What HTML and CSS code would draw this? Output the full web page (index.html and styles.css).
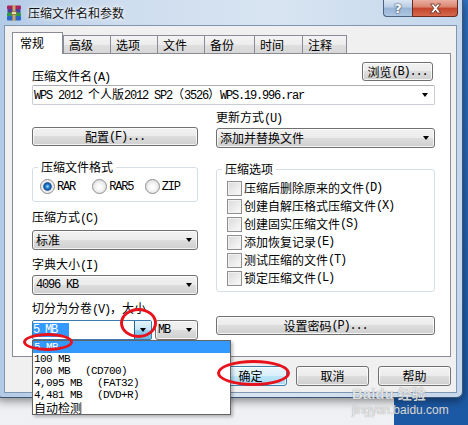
FILE: index.html
```html
<!DOCTYPE html>
<html lang="zh-CN">
<head>
  <meta charset="UTF-8">
  <meta name="viewport" content="width=device-width, initial-scale=1.0">
  <title>压缩文件名和参数</title>
  <link rel="stylesheet" href="styles.css">
</head>
<body>
  <div class="window">
    <div class="titlebar">
      <svg class="app-icon" width="16" height="16" viewBox="0 0 16 16">
        <rect x="1" y="0.5" width="14" height="4" rx="1" fill="#a8245c"/>
        <rect x="1.5" y="4" width="13" height="4" rx="1" fill="#4a3fa0"/>
        <rect x="1" y="7.5" width="14" height="4" rx="1" fill="#2e9a44"/>
        <rect x="1" y="11" width="14" height="4.5" rx="1" fill="#2a66c2"/>
        <rect x="6.5" y="0" width="3" height="16" fill="#c9a66a"/>
        <rect x="5.5" y="6.5" width="5" height="3" fill="#ecdcae" stroke="#6e5630" stroke-width="0.6"/>
      </svg>
      <span class="title">压缩文件名和参数</span>
      <div class="caption-buttons">
        <div class="cap-btn help">?</div>
        <div class="cap-btn close">
          <svg width="13" height="11" viewBox="0 0 13 11">
            <path d="M1.5 1h3.2l1.8 2.4L8.3 1h3.2L8.2 5.3l3.5 4.7H8.5L6.5 7.3 4.5 10H1.3l3.5-4.7z" fill="#fff" stroke="#5a2418" stroke-width="0.8"/>
          </svg>
        </div>
      </div>
    </div>

    <div class="client">
      <div class="tabs">
        <div class="tab active">常规</div>
        <div class="tab">高级</div>
        <div class="tab">选项</div>
        <div class="tab">文件</div>
        <div class="tab tab-backup">备份</div>
        <div class="tab tab-time">时间</div>
        <div class="tab tab-note">注释</div>
      </div>

      <div class="panel">
        <div class="name-row">
          <span class="label">压缩文件名<span class="m">(A)</span></span>
          <div class="btn browse">浏览<span class="m">(B)...</span></div>
        </div>
        <div class="combo edit">
          <span><span class="m">WPS 2012 </span>个人版<span class="m">2012 SP2</span>（<span class="m">3526</span>）<span class="m">WPS.19.996.rar</span></span>
        </div>

        <div class="columns">
          <div class="col">
            <div class="btn config">配置<span class="m">(F)...</span></div>

            <fieldset class="group">
              <legend>压缩文件格式</legend>
              <div class="radios">
                <span class="radio on m">RAR</span>
                <span class="radio m">RAR5</span>
                <span class="radio m">ZIP</span>
              </div>
            </fieldset>

            <span class="label gap-8">压缩方式<span class="m">(C)</span></span>
            <div class="combo gap-4">标准</div>

            <span class="label gap-7">字典大小<span class="m">(I)</span></span>
            <div class="combo gap-2"><span class="m">4096 KB</span></div>

            <span class="label gap-6">切分为分卷<span class="m">(V)</span>，大小</span>
            <div class="volume-row">
              <div class="volume-field">
                <div class="combo edit open">
                  <span class="sel m">5 MB</span>
                  <span class="drop-btn"></span>
                </div>
                <ul class="droplist">
                  <li class="hot">5 MB</li>
                  <li>100 MB</li>
                  <li>700 MB<span class="note">(CD700)</span></li>
                  <li>4,095 MB<span class="note">(FAT32)</span></li>
                  <li>4,481 MB<span class="note">(DVD+R)</span></li>
                  <li class="auto"><span class="cjk">自动检测</span></li>
                </ul>
              </div>
              <div class="combo unit"><span class="m">MB</span></div>
            </div>
          </div>

          <div class="col">
            <span class="label gap-5">更新方式<span class="m">(U)</span></span>
            <div class="combo gap-2">添加并替换文件</div>

            <fieldset class="group">
              <legend>压缩选项</legend>
              <div class="checks">
                <span class="check">压缩后删除原来的文件<span class="m">(D)</span></span>
                <span class="check">创建自解压格式压缩文件<span class="m">(X)</span></span>
                <span class="check">创建固实压缩文件<span class="m">(S)</span></span>
                <span class="check">添加恢复记录<span class="m">(E)</span></span>
                <span class="check">测试压缩的文件<span class="m">(T)</span></span>
                <span class="check">锁定压缩文件<span class="m">(L)</span></span>
              </div>
            </fieldset>

            <div class="btn password">设置密码<span class="m">(P)...</span></div>
          </div>
        </div>
      </div>

      <div class="actions">
        <div class="btn default">确定</div>
        <div class="btn">取消</div>
        <div class="btn">帮助</div>
      </div>
    </div>
  </div>

  <!-- red annotation rings drawn over the screenshot -->
  <div class="mark mark-arrow"></div>
  <div class="mark mark-item"></div>
  <div class="mark mark-ok"></div>

  <div class="watermark">
    <div class="wm-logo">Baidu<span class="cjk">经验</span></div>
    <div class="wm-url">jingyan.baidu.com</div>
  </div>
</body>
</html>
```

FILE: styles.css
```css
* {
  margin: 0;
  padding: 0;
  box-sizing: border-box;
}

body {
  width: 468px;
  height: 425px;
  overflow: hidden;
  position: relative;
  font: 12px/14px "Noto Sans CJK SC", sans-serif;
  color: #000;
  background:
    linear-gradient(#2e70c0, #1b58a4) right top / 74px 100% no-repeat,
    linear-gradient(#e6eaef, #f3f4f6 30%, #eef0f3);
}

.m {
  font-family: "Liberation Mono", "Noto Sans CJK SC", monospace;
  letter-spacing: -1.2px;
}

.cjk {
  font-family: "Noto Sans CJK SC", sans-serif;
  letter-spacing: 0;
}

/* window frame */
.window {
  display: flex;
  flex-direction: column;
  width: 467px;
  height: 398px;
  margin-left: -4px;
  padding: 0 5px 4px 7px;
  border: 1px solid #3f5576;
  border-top: 0;
  border-radius: 0 0 6px 6px;
  background: linear-gradient(to right, #b2cae6, #cddcee 25%, #d8e4f1 60%, #c4d7ec);
  box-shadow: 0 3px 10px rgba(0, 0, 0, 0.45);
}

.titlebar {
  display: flex;
  align-items: flex-start;
  height: 25px;
  margin-right: -1px;
}

.app-icon {
  margin: 5px 0 0 2px;
}

.title {
  margin: 6px 0 0 6px;
  color: #111;
  text-shadow: 0 0 6px #fff, 0 0 3px #fff;
}

.caption-buttons {
  display: flex;
  margin-left: auto;
}

.cap-btn {
  display: flex;
  align-items: center;
  justify-content: center;
  height: 17px;
  border: 1px solid #4d6280;
  border-top: 0;
}

.help {
  width: 29px;
  border-radius: 0 0 0 4px;
  border-right: 0;
  background: linear-gradient(#dbe6f3, #b7cce4 45%, #98b4d5 50%, #adc6e2);
  color: #fff;
  font: bold 13px/1 "DejaVu Sans", sans-serif;
  text-shadow: 0 0 2px #2c3e57, 0 0 1px #2c3e57;
}

.close {
  width: 46px;
  border-color: #6a2c20;
  border-radius: 0 0 4px 0;
  background: linear-gradient(#eab0a2, #d9826d 45%, #c3442b 50%, #d66a4c);
}

/* client area */
.client {
  flex: 1;
  border: 1px solid #8196b0;
  background: #f0f0f0;
  padding: 6px 5px 0 7px;
}

.tabs {
  position: relative;
  z-index: 1;
  display: flex;
  align-items: flex-end;
  height: 21px;
}

.tab {
  width: 47px;
  height: 18px;
  padding-left: 5px;
  border: 1px solid #898c95;
  border-bottom: 0;
  border-right: 0;
  background: linear-gradient(#f4f4f4, #ececec 50%, #e0e0e0 50%, #d6d6d6);
  line-height: 17px;
}

.tab:last-child {
  border-right: 1px solid #898c95;
}

.tab-backup { width: 50px; }
.tab-time { width: 48px; }
.tab-note { width: 45px; }

.tab.active {
  width: 51px;
  height: 22px;
  margin-bottom: -1px;
  padding-left: 7px;
  border-right: 1px solid #898c95;
  background: #fff;
  line-height: 20px;
}

.panel {
  height: 304px;
  border: 1px solid #898c95;
  background: #fff;
  padding: 8px 15px 0 19px;
}

.name-row {
  display: flex;
  justify-content: space-between;
  height: 23px;
}

.name-row .label {
  align-self: flex-end;
}

.label {
  display: block;
  line-height: 14px;
}

/* buttons */
.btn {
  display: flex;
  align-items: center;
  justify-content: center;
  height: 19px;
  border: 1px solid #707070;
  border-radius: 3px;
  background: linear-gradient(#f2f2f2, #ebebeb 50%, #dddddd 50%, #cfcfcf);
  box-shadow: inset 0 0 0 1px rgba(255, 255, 255, 0.75);
}

.browse {
  width: 71px;
  margin-right: 2px;
}

.config {
  margin-top: 22px;
}

.password {
  margin-top: 24px;
}

.btn.default {
  border-color: #3c7fb1;
  background: linear-gradient(#eaf6fd, #d9f0fc 50%, #bee6fd 50%, #a7d9f5);
}

/* combo boxes */
.combo {
  display: flex;
  align-items: center;
  height: 20px;
  padding: 0 5px 0 3px;
  border: 1px solid #707070;
  border-radius: 3px;
  background: linear-gradient(#f2f2f2, #ebebeb 50%, #dddddd 50%, #cfcfcf);
  box-shadow: inset 0 0 0 1px rgba(255, 255, 255, 0.75);
  white-space: nowrap;
}

.combo::after {
  content: "";
  margin-left: auto;
  border-style: solid;
  border-width: 4px 3.5px 0;
  border-color: #000 transparent transparent;
}

.combo.edit {
  padding-left: 1px;
  padding-right: 6px;
  border-color: #c9ccd2;
  border-top-color: #abadb3;
  border-radius: 2px;
  background: #fff;
  box-shadow: none;
}

.combo.open {
  width: 120px;
  padding: 0;
  border-color: #3d7bad;
}

.combo.open::after {
  display: none;
}

.sel {
  height: 14px;
  padding-right: 12px;
  background: #3399ff;
  color: #fff;
}

.drop-btn {
  display: flex;
  align-items: center;
  justify-content: center;
  width: 17px;
  height: 100%;
  margin-left: auto;
  border-left: 1px solid #2c628b;
  background: linear-gradient(#e5f4fc, #c4e5f6 50%, #98d1ef 50%, #6cb6de);
}

.drop-btn::after {
  content: "";
  border-style: solid;
  border-width: 4px 3.5px 0;
  border-color: #000 transparent transparent;
}

.unit {
  width: 43px;
  padding-left: 2px;
}

/* columns */
.columns {
  display: grid;
  grid-template-columns: 166px 219px;
  column-gap: 18px;
  align-items: start;
}

.col {
  display: flex;
  flex-direction: column;
}

.gap-2 { margin-top: 2px; }
.gap-4 { margin-top: 4px; }
.gap-5 { margin-top: 5px; }
.gap-6 { margin-top: 6px; }
.gap-7 { margin-top: 7px; }
.gap-8 { margin-top: 8px; }

.group {
  min-width: 0;
  margin-top: 14px;
  border: 1px solid #d5dfe5;
  border-radius: 3px;
}

.group legend {
  margin-left: 5px;
  padding: 0 3px;
  line-height: 14px;
}

.radios {
  display: flex;
  padding: 6px 0 8px 7px;
}

.radio {
  display: flex;
  align-items: center;
  gap: 2px;
  width: 54px;
  height: 13px;
}

.radio::before {
  content: "";
  flex: none;
  width: 13px;
  height: 13px;
  border: 1px solid #8d8d8d;
  border-radius: 50%;
  background: radial-gradient(circle at 50% 55%, #fdfdfd 20%, #d4d4d4 100%);
}

.radio.on::before {
  background: radial-gradient(circle, #a4dcff 0, #2b8ddb 1.8px, #0f4b94 3.4px, #5f86b4 4.2px, #e8e8e8 4.6px, #fbfbfb 100%);
}

.checks {
  display: flex;
  flex-direction: column;
  padding: 3px 0 4px 10px;
}

.check {
  display: flex;
  align-items: center;
  height: 18px;
}

.check::before {
  content: "";
  flex: none;
  width: 13px;
  height: 13px;
  margin-right: 2px;
  border: 1px solid #8f8f8f;
  background: linear-gradient(135deg, #d9d9d9, #fbfbfb);
  box-shadow: inset 0 0 0 1px #f2f2f2;
}

.volume-row {
  display: flex;
  gap: 3px;
  margin-top: 3px;
}

.volume-field {
  position: relative;
}

/* open drop-down list */
.droplist {
  position: absolute;
  top: 100%;
  left: 0;
  z-index: 5;
  width: 199px;
  border: 1px solid #646464;
  background: #fff;
  list-style: none;
  font: 11px/12px "Liberation Mono", monospace;
  letter-spacing: -0.6px;
  box-shadow: 2px 2px 3px rgba(0, 0, 0, 0.25);
}

.droplist li {
  height: 12px;
  padding-left: 1px;
  white-space: nowrap;
}

.droplist li.hot {
  background: #3399ff;
  color: #fff;
}

.droplist .note {
  margin-left: 15px;
}

.droplist li.auto {
  height: 13px;
}

.droplist .cjk {
  display: block;
  font-size: 12px;
  line-height: 13px;
}

.actions {
  display: flex;
  justify-content: flex-end;
  gap: 9px;
  margin-top: 9px;
}

.actions .btn {
  width: 73px;
  height: 20px;
}

/* annotations */
.mark {
  position: absolute;
  z-index: 10;
  border: 3px solid #e8121c;
  border-radius: 50%;
}

.mark-arrow {
  left: 120px;
  top: 308px;
  width: 37px;
  height: 30px;
}

.mark-item {
  left: 23px;
  top: 333px;
  width: 50px;
  height: 18px;
}

.mark-ok {
  left: 217px;
  top: 360px;
  width: 73px;
  height: 26px;
}

.watermark {
  position: absolute;
  left: 352px;
  top: 386px;
  z-index: 9;
  color: rgba(255, 255, 255, 0.78);
  text-shadow: 0 0 1px rgba(80, 80, 80, 0.7);
}

.wm-logo {
  font: bold 15px/14px "Liberation Sans", sans-serif;
}

.wm-logo .cjk {
  margin-left: 4px;
  font-size: 14px;
}

.wm-url {
  margin-top: 3px;
  font: 12px/12px "Liberation Sans", sans-serif;
}
```
